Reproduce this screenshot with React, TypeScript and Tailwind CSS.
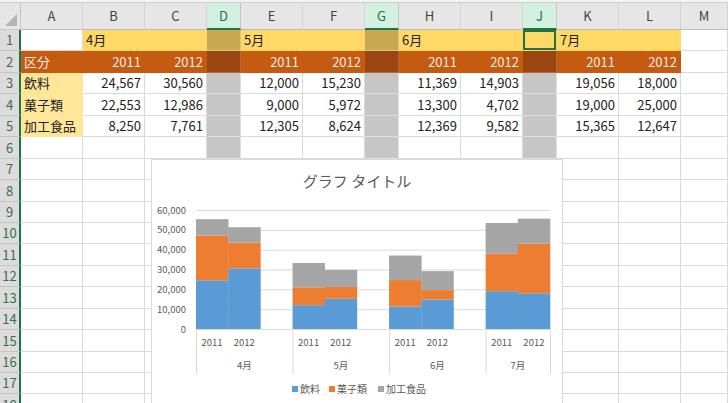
import React from 'react';

const COLS = ['A', 'B', 'C', 'D', 'E', 'F', 'G', 'H', 'I', 'J', 'K', 'L', 'M'];
const SELECTED = ['D', 'G', 'J'];
const GRID = 'grid grid-cols-[21px_62px_62px_62px_34px_62px_62px_34px_62px_62px_34px_62px_62px_1fr]';

type Fill = 'white' | 'gold' | 'brown' | 'pale' | 'selGold' | 'selBrown' | 'selGrey' | 'active';

const FILL: Record<Fill, string> = {
  white: 'bg-white border-r border-b border-[#dadada] text-[#222]',
  gold: 'bg-[#ffd966] border-r border-b border-transparent text-[#222]',
  brown: 'bg-[#c55a11] border-r border-b border-transparent text-[#f4ece6]',
  pale: 'bg-[#ffe699] border-r border-b border-transparent text-[#222]',
  selGold: 'bg-[#c8a850] border-r border-b border-[#d8c487]',
  selBrown: 'bg-[#9b4510] border-r border-b border-[#b06a3c]',
  selGrey: 'bg-[#c6c6c6] border-r border-b border-[#dedede]',
  active: 'bg-[#ffd966] border-r border-b border-transparent shadow-[inset_0_0_0_2px_#217346]',
};

const items = ['飲料', '菓子類', '加工食品'];
const numbers: Record<string, string[]> = {
  B: ['24,567', '22,553', '8,250'],
  C: ['30,560', '12,986', '7,761'],
  E: ['12,000', '9,000', '12,305'],
  F: ['15,230', '5,972', '8,624'],
  H: ['11,369', '13,300', '12,369'],
  I: ['14,903', '4,702', '9,582'],
  K: ['19,056', '19,000', '15,365'],
  L: ['18,000', '25,000', '12,647'],
};
const months: Record<string, string> = { B: '4月', E: '5月', H: '6月', K: '7月' };
const years: Record<string, string> = { B: '2011', C: '2012', E: '2011', F: '2012', H: '2011', I: '2012', K: '2011', L: '2012' };

function cellFor(row: number, col: string): { fill: Fill; text?: string; right?: boolean } {
  const sel = SELECTED.includes(col);
  if (row === 1) {
    if (col === 'A' || col === 'M') return { fill: 'white' };
    if (col === 'J') return { fill: 'active' };
    if (sel) return { fill: 'selGold' };
    return { fill: 'gold', text: months[col] };
  }
  if (row === 2) {
    if (col === 'M') return { fill: 'white' };
    if (sel) return { fill: 'selBrown' };
    if (col === 'A') return { fill: 'brown', text: '区分' };
    return { fill: 'brown', text: years[col], right: true };
  }
  if (sel) return { fill: 'selGrey' };
  if (row >= 3 && row <= 5) {
    if (col === 'A') return { fill: 'pale', text: items[row - 3] };
    if (numbers[col]) return { fill: 'white', text: numbers[col][row - 3], right: true };
  }
  return { fill: 'white' };
}

// stacked values per slot (11 slots, blanks between months)
const data: ([number, number, number] | null)[] = [
  [24567, 22553, 8250],
  [30560, 12986, 7761],
  null,
  [12000, 9000, 12305],
  [15230, 5972, 8624],
  null,
  [11369, 13300, 12369],
  [14903, 4702, 9582],
  null,
  [19056, 19000, 15365],
  [18000, 25000, 12647],
];
const colors = ['#5b9bd5', '#ed7d31', '#a5a5a5'];

function Chart() {
  const x0 = 45;
  const slot = 354 / 11;
  const y0 = 170;
  const k = 119 / 60000;
  const ticks = [0, 10000, 20000, 30000, 40000, 50000, 60000];
  const seps = [0, 3, 6, 9, 11];
  const monthSpans: [string, number, number][] = [
    ['4月', 0, 3],
    ['5月', 3, 6],
    ['6月', 6, 9],
    ['7月', 9, 11],
  ];
  return (
    <svg width={412} height={250} className="block font-['Noto_Sans_CJK_JP',sans-serif]">
      <rect x={0.5} y={0.5} width={411} height={260} fill="#fff" stroke="#d9d9d9" />
      <text x={206} y={28} textAnchor="middle" fontSize={15} fill="#595959">
        グラフ タイトル
      </text>
      {ticks.map((t) => (
        <g key={t}>
          <line x1={x0} x2={x0 + 354} y1={y0 - t * k + 0.5} y2={y0 - t * k + 0.5} stroke="#d9d9d9" />
          <text x={35} y={y0 - t * k + 3.5} textAnchor="end" fontSize={9.5} fill="#595959">
            {t === 0 ? '0' : t.toLocaleString('en-US')}
          </text>
        </g>
      ))}
      {data.map((d, i) => {
        if (!d) return null;
        let acc = 0;
        return (
          <g key={i}>
            {d.map((v, j) => {
              const top = y0 - (acc + v) * k;
              const h = v * k;
              acc += v;
              return <rect key={j} x={x0 + i * slot} y={top} width={slot + 0.3} height={h} fill={colors[j]} />;
            })}
            <text x={x0 + i * slot + slot / 2} y={187} textAnchor="middle" fontSize={9.5} fill="#595959">
              {i % 3 === 0 ? '2011' : '2012'}
            </text>
          </g>
        );
      })}
      {seps.map((s) => (
        <line key={s} x1={x0 + s * slot + 0.5} x2={x0 + s * slot + 0.5} y1={y0} y2={215} stroke="#d9d9d9" />
      ))}
      {monthSpans.map(([m, a, b]) => (
        <text key={m} x={x0 + ((a + b) / 2) * slot} y={210} textAnchor="middle" fontSize={9.5} fill="#595959">
          {m}
        </text>
      ))}
      {items.map((name, i) => {
        const lx = [141, 178, 227][i];
        return (
          <g key={name}>
            <rect x={lx} y={227} width={6} height={6} fill={colors[i]} />
            <text x={lx + 8} y={233.5} fontSize={10} fill="#595959">
              {name}
            </text>
          </g>
        );
      })}
    </svg>
  );
}

export default function App() {
  const rows = Array.from({ length: 18 }, (_, i) => i + 1);
  return (
    <div className="relative w-[728px] h-[403px] overflow-hidden bg-white font-['Noto_Sans_CJK_JP',sans-serif] text-[13px]">
      {/* top strip */}
      <div className="h-[3px] bg-[#f3f3f3] border-b border-[#cfcfcf]" />

      {/* column headers */}
      <div className={`${GRID} h-[27px]`}>
        <div className="relative bg-[#e6e6e6] border-r border-b border-[#c6c6c6]">
          <svg width="12" height="12" className="absolute right-[3px] bottom-[3px]">
            <polygon points="12,0 12,12 0,12" fill="#b4b4b4" />
          </svg>
        </div>
        {COLS.map((c) =>
          SELECTED.includes(c) ? (
            <div
              key={c}
              className="flex items-center justify-center bg-[#d3f0e0] text-[#217346] border-r border-[#c6c6c6] border-b-2 border-b-[#217346]"
            >
              {c}
            </div>
          ) : (
            <div
              key={c}
              className="flex items-center justify-center bg-[#e6e6e6] text-[#444] border-r border-[#d4d4d4] border-b border-b-[#bcbcbc]"
            >
              {c}
            </div>
          )
        )}
      </div>

      {/* rows */}
      {rows.map((r) => (
        <div key={r} className={`${GRID} h-[21.45px]`}>
          <div className="flex items-center justify-center bg-[#dcdcdc] text-[#3b6e55] border-b border-[#c4c4c4] border-r-2 border-r-[#217346]">
            {r}
          </div>
          {COLS.map((c) => {
            const cell = cellFor(r, c);
            return (
              <div
                key={c}
                className={`${FILL[cell.fill]} flex items-center px-[3px] whitespace-nowrap ${
                  cell.right ? 'justify-end' : 'justify-start'
                }`}
              >
                {cell.text}
              </div>
            );
          })}
        </div>
      ))}

      {/* chart object floating over the sheet */}
      <div className="absolute left-[151px] top-[159px]">
        <Chart />
      </div>
    </div>
  );
}
